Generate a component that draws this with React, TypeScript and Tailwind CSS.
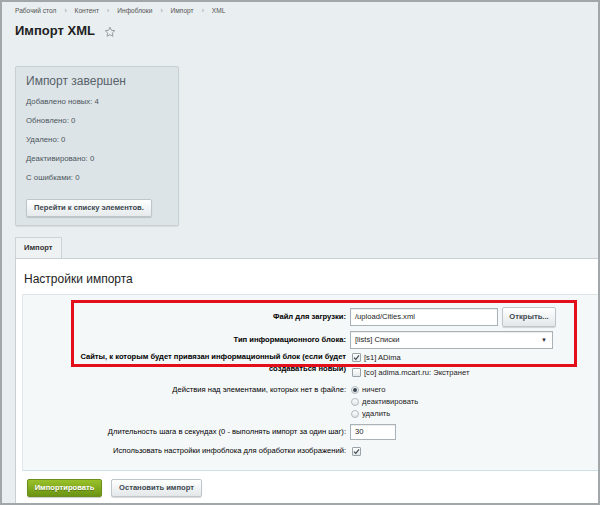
import React from "react";

const crumbs = ["Рабочий стол", "Контент", "Инфоблоки", "Импорт", "XML"];
const stats = [
  "Добавлено новых: 4",
  "Обновлено: 0",
  "Удалено: 0",
  "Деактивировано: 0",
  "С ошибками: 0",
];

const Check = ({ checked }: { checked?: boolean }) => (
  <span className="inline-flex w-[9px] h-[9px] shrink-0 items-center justify-center border border-[#9aa3a8] bg-gradient-to-b from-white to-[#e4e8ea] rounded-[1px]">
    {checked && (
      <svg width="7" height="7" viewBox="0 0 7 7">
        <path d="M1 3.6 L2.8 5.4 L6 1.4" fill="none" stroke="#3d4a52" strokeWidth="1.2" />
      </svg>
    )}
  </span>
);

const Radio = ({ checked }: { checked?: boolean }) => (
  <span className="inline-flex w-[8px] h-[8px] shrink-0 items-center justify-center rounded-full border border-[#b2b9bd] bg-gradient-to-b from-white to-[#dfe3e5]">
    {checked && <span className="w-[4px] h-[4px] rounded-full bg-[#3a4650]" />}
  </span>
);

const Row = ({
  label,
  bold,
  children,
  className,
}: {
  label: React.ReactNode;
  bold?: boolean;
  children: React.ReactNode;
  className?: string;
}) => (
  <div className={"flex " + (className ?? "")}>
    <div
      className={
        "w-[323px] shrink-0 text-right text-[7.6px] text-black " +
        (bold ? "font-bold" : "text-[#222]")
      }
    >
      {label}
    </div>
    <div className="ml-[4px] flex flex-col">{children}</div>
  </div>
);

export default function App() {
  return (
    <div className="relative w-[600px] h-[505px] border-2 border-[#a2a7aa] bg-[#e9eef0] font-['Liberation_Sans',Arial,sans-serif] overflow-hidden flex flex-col">
      <div className="pl-[13px] pt-[4px] flex items-center text-[6.6px] leading-[9px] text-[#555]">
        {crumbs.map((c, i) => (
          <React.Fragment key={c}>
            {i > 0 && <span className="mx-[8px] text-[#8a9499]">›</span>}
            <span>{c}</span>
          </React.Fragment>
        ))}
      </div>

      <div className="pl-[13px] mt-[6px] flex items-center">
        <h1 className="text-[13px] leading-[20px] font-bold text-[#222]">Импорт XML</h1>
        <svg className="ml-[9px] mt-[2px]" width="12" height="12" viewBox="0 0 24 24">
          <path
            d="M12 2.5l2.9 6.1 6.6.8-4.9 4.6 1.3 6.6L12 17.3l-5.9 3.3 1.3-6.6-4.9-4.6 6.6-.8z"
            fill="none"
            stroke="#8c979c"
            strokeWidth="1.8"
            strokeLinejoin="round"
          />
        </svg>
      </div>

      <div className="ml-[13px] mt-[25px] w-[164px] h-[160px] border border-[#c8d0d4] bg-[#dde4e7] rounded-[2px] shadow-[0_1px_1px_rgba(0,0,0,0.08)] pl-[10px] pt-[6px] flex flex-col">
        <div className="text-[12px] leading-[16px] text-[#58626a]">Импорт завершен</div>
        <div className="mt-[3px] flex flex-col">
          {stats.map((s) => (
            <div key={s} className="h-[19px] leading-[19px] text-[7.8px] text-[#4b555c]">
              {s}
            </div>
          ))}
        </div>
        <button className="mt-[12px] w-[126px] h-[18px] rounded-[2px] border border-[#bfc6ca] bg-gradient-to-b from-white to-[#e6eaec] shadow-[0_1px_1px_rgba(0,0,0,0.15)] text-[7.6px] font-bold text-[#3c4850]">
          Перейти к списку элементов.
        </button>
      </div>

      <div className="ml-[13px] mt-[11px] flex">
        <div className="w-[47px] h-[21px] border border-b-0 border-[#cdd4d7] bg-[#eef2f3] pl-[8px] text-[7.6px] leading-[20px] font-bold text-[#333]">
          Импорт
        </div>
      </div>

      <div className="ml-[13px] flex-1 border-l border-t border-[#c9d0d3] bg-white flex flex-col">
        <div className="h-[35px] pl-[8px] pt-[12px] text-[12px] leading-[16px] text-[#222]">
          Настройки импорта
        </div>

        <div className="ml-[6px] border-l border-t border-b border-l-[#e1e6e8] border-t-[#dfe4e6] border-b-[#cfe2e8] bg-[#f5f8f9] pt-[12px] pb-[13px] flex flex-col">
          <Row className="items-center" label={<span className="leading-[18px]">Файл для загрузки:</span>} bold>
            <div className="flex items-center">
              <div className="w-[148px] h-[18px] border border-[#a9b2b6] bg-white pl-[4px] text-[7.6px] leading-[16px] text-[#222] shadow-[inset_0_1px_1px_rgba(0,0,0,0.08)]">
                /upload/Cities.xml
              </div>
              <button className="ml-[4px] w-[54px] h-[20px] rounded-[2px] border border-[#bfc6ca] bg-gradient-to-b from-white to-[#e3e7e9] shadow-[0_1px_1px_rgba(0,0,0,0.15)] text-[7.6px] font-bold text-[#3c4850]">
                Открыть...
              </button>
            </div>
          </Row>

          <Row className="mt-[4px]" label={<span className="leading-[18px]">Тип информационного блока:</span>} bold>
            <div className="w-[203px] h-[18px] border border-[#a9b2b6] bg-white pl-[4px] pr-[5px] flex items-center justify-between text-[7.6px] text-[#222] shadow-[inset_0_1px_1px_rgba(0,0,0,0.08)]">
              <span>[lists] Списки</span>
              <span className="text-[6px] text-[#333]">▼</span>
            </div>
          </Row>

          <Row
            className="mt-[1px]"
            bold
            label={
              <div className="pt-[1px] leading-[12px]">
                Сайты, к которым будет привязан информационный блок (если будет
                <br />
                создаваться новый)
              </div>
            }
          >
            <div className="h-[15px] flex items-center gap-[3px] ml-[2px] text-[7.6px] text-[#222]">
              <Check checked />
              <span>[s1] ADima</span>
            </div>
            <div className="h-[15px] flex items-center gap-[3px] ml-[2px] text-[7.6px] text-[#222]">
              <Check />
              <span>[co] adima.mcart.ru: Экстранет</span>
            </div>
          </Row>

          <Row
            className="mt-[4px] leading-[12px]"
            label="Действия над элементами, которых нет в файле:"
          >
            {[
              ["ничего", true],
              ["деактивировать", false],
              ["удалить", false],
            ].map(([t, c]) => (
              <div key={t as string} className="h-[12px] flex items-center gap-[3px] ml-[1px] text-[7.6px] text-[#222]">
                <Radio checked={c as boolean} />
                <span>{t as string}</span>
              </div>
            ))}
          </Row>

          <Row
            className="mt-[4px]"
            label={<span className="leading-[16px]">Длительность шага в секундах (0 - выполнять импорт за один шаг):</span>}
          >
            <div className="w-[46px] h-[16px] border border-[#a9b2b6] bg-white pl-[4px] text-[7.6px] leading-[14px] text-[#222] shadow-[inset_0_1px_1px_rgba(0,0,0,0.08)]">
              30
            </div>
          </Row>

          <Row
            className="mt-[5px]"
            label={<span className="leading-[12px]">Использовать настройки инфоблока для обработки изображений:</span>}
          >
            <div className="h-[12px] flex items-center ml-[2px]">
              <Check checked />
            </div>
          </Row>
        </div>

        <div className="ml-[11px] mt-[8px] flex gap-[9px]">
          <button className="w-[75px] h-[18px] rounded-[2px] border border-[#6c8e1c] bg-gradient-to-b from-[#9ac12a] to-[#6b9413] text-[7.6px] font-bold text-white [text-shadow:0_1px_0_rgba(0,0,0,0.3)] shadow-[0_1px_1px_rgba(0,0,0,0.2)]">
            Импортировать
          </button>
          <button className="w-[91px] h-[18px] rounded-[2px] border border-[#bfc6ca] bg-gradient-to-b from-white to-[#e3e7e9] text-[7.6px] font-bold text-[#3c4850] shadow-[0_1px_1px_rgba(0,0,0,0.15)]">
            Остановить импорт
          </button>
        </div>
      </div>

      <div className="absolute left-[69px] top-[298px] w-[506px] h-[67px] border-[3px] border-[#e3101c] pointer-events-none" />
    </div>
  );
}
